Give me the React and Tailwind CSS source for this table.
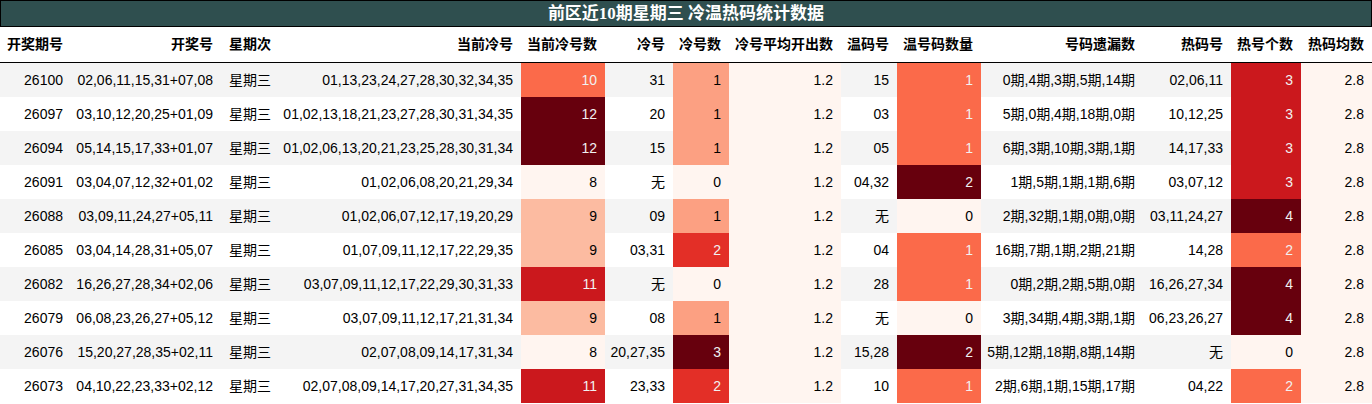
import React from "react";

const GRID =
  "grid grid-cols-[71px_150px_59px_241px_84px_68px_56px_112px_56px_84px_162px_88px_70px_71px]";

const C = {
  r0: "bg-[#fff5f0] text-black",
  r25: "bg-[#fcbba1] text-black",
  r33: "bg-[#fca082] text-black",
  r50: "bg-[#fb6a4a] text-[#f1f1f1]",
  r67: "bg-[#e32f27] text-[#f1f1f1]",
  r75: "bg-[#cb181d] text-[#f1f1f1]",
  r100: "bg-[#67000d] text-[#f1f1f1]",
};

const curCold = { 8: C.r0, 9: C.r25, 10: C.r50, 11: C.r75, 12: C.r100 };
const coldCnt = { 0: C.r0, 1: C.r33, 2: C.r67, 3: C.r100 };
const warmCnt = { 0: C.r0, 1: C.r50, 2: C.r100 };
const hotCnt = { 0: C.r0, 2: C.r50, 3: C.r75, 4: C.r100 };

const rows = [
  ["26100", "02,06,11,15,31+07,08", "01,13,23,24,27,28,30,32,34,35", 10, "31", 1, "15", 1, "0期,4期,3期,5期,14期", "02,06,11", 3],
  ["26097", "03,10,12,20,25+01,09", "01,02,13,18,21,23,27,28,30,31,34,35", 12, "20", 1, "03", 1, "5期,0期,4期,18期,0期", "10,12,25", 3],
  ["26094", "05,14,15,17,33+01,07", "01,02,06,13,20,21,23,25,28,30,31,34", 12, "15", 1, "05", 1, "6期,3期,10期,3期,1期", "14,17,33", 3],
  ["26091", "03,04,07,12,32+01,02", "01,02,06,08,20,21,29,34", 8, "无", 0, "04,32", 2, "1期,5期,1期,1期,6期", "03,07,12", 3],
  ["26088", "03,09,11,24,27+05,11", "01,02,06,07,12,17,19,20,29", 9, "09", 1, "无", 0, "2期,32期,1期,0期,0期", "03,11,24,27", 4],
  ["26085", "03,04,14,28,31+05,07", "01,07,09,11,12,17,22,29,35", 9, "03,31", 2, "04", 1, "16期,7期,1期,2期,21期", "14,28", 2],
  ["26082", "16,26,27,28,34+02,06", "03,07,09,11,12,17,22,29,30,31,33", 11, "无", 0, "28", 1, "0期,2期,2期,5期,0期", "16,26,27,34", 4],
  ["26079", "06,08,23,26,27+05,12", "03,07,09,11,12,17,21,31,34", 9, "08", 1, "无", 0, "3期,34期,4期,3期,1期", "06,23,26,27", 4],
  ["26076", "15,20,27,28,35+02,11", "02,07,08,09,14,17,31,34", 8, "20,27,35", 3, "15,28", 2, "5期,12期,18期,8期,14期", "无", 0],
  ["26073", "04,10,22,23,33+02,12", "02,07,08,09,14,17,20,27,31,34,35", 11, "23,33", 2, "10", 1, "2期,6期,1期,15期,17期", "04,22", 2],
];

const headers = [
  ["开奖期号", "justify-end"],
  ["开奖号", "justify-end"],
  ["星期次", "justify-start"],
  ["当前冷号", "justify-end"],
  ["当前冷号数", "justify-end"],
  ["冷号", "justify-end"],
  ["冷号数", "justify-end"],
  ["冷号平均开出数", "justify-end"],
  ["温码号", "justify-end"],
  ["温号码数量", "justify-end"],
  ["号码遗漏数", "justify-end"],
  ["热码号", "justify-end"],
  ["热号个数", "justify-end"],
  ["热码均数", "justify-end"],
];

function Cell({ children, className = "", left = false }) {
  return (
    <div
      className={
        "flex items-center px-2 whitespace-nowrap overflow-hidden " +
        (left ? "justify-start " : "justify-end ") +
        className
      }
    >
      {children}
    </div>
  );
}

export default function App() {
  return (
    <div
      className="w-[1372px] h-[404px] bg-white text-black overflow-hidden"
      style={{ fontFamily: '"Liberation Sans", "Noto Sans CJK SC", sans-serif' }}
    >
      <div
        className="h-[27px] border border-black bg-[#2f4f4f] text-white font-bold text-[17px] flex items-center justify-center leading-none"
        style={{ fontFamily: '"Liberation Serif", "Noto Sans CJK SC", serif' }}
      >
        前区近10期星期三 冷温热码统计数据
      </div>
      <div className={GRID + " h-[36px] border-b border-black text-[14px] font-bold bg-white"}>
        {headers.map(([h, j]) => (
          <div key={h} className={"flex items-center px-2 whitespace-nowrap " + j}>
            {h}
          </div>
        ))}
      </div>
      {rows.map((r, i) => {
        const stripe = i % 2 === 0 ? "bg-[#f4f4f4]" : "bg-white";
        return (
          <div key={r[0]} className={GRID + " h-[34px] text-[14px] " + stripe}>
            <Cell>{r[0]}</Cell>
            <Cell>{r[1]}</Cell>
            <Cell left>星期三</Cell>
            <Cell>{r[2]}</Cell>
            <Cell className={curCold[r[3]]}>{r[3]}</Cell>
            <Cell>{r[4]}</Cell>
            <Cell className={coldCnt[r[5]]}>{r[5]}</Cell>
            <Cell className={C.r0}>1.2</Cell>
            <Cell>{r[6]}</Cell>
            <Cell className={warmCnt[r[7]]}>{r[7]}</Cell>
            <Cell>{r[8]}</Cell>
            <Cell>{r[9]}</Cell>
            <Cell className={hotCnt[r[10]]}>{r[10]}</Cell>
            <Cell className={C.r0}>2.8</Cell>
          </div>
        );
      })}
    </div>
  );
}
